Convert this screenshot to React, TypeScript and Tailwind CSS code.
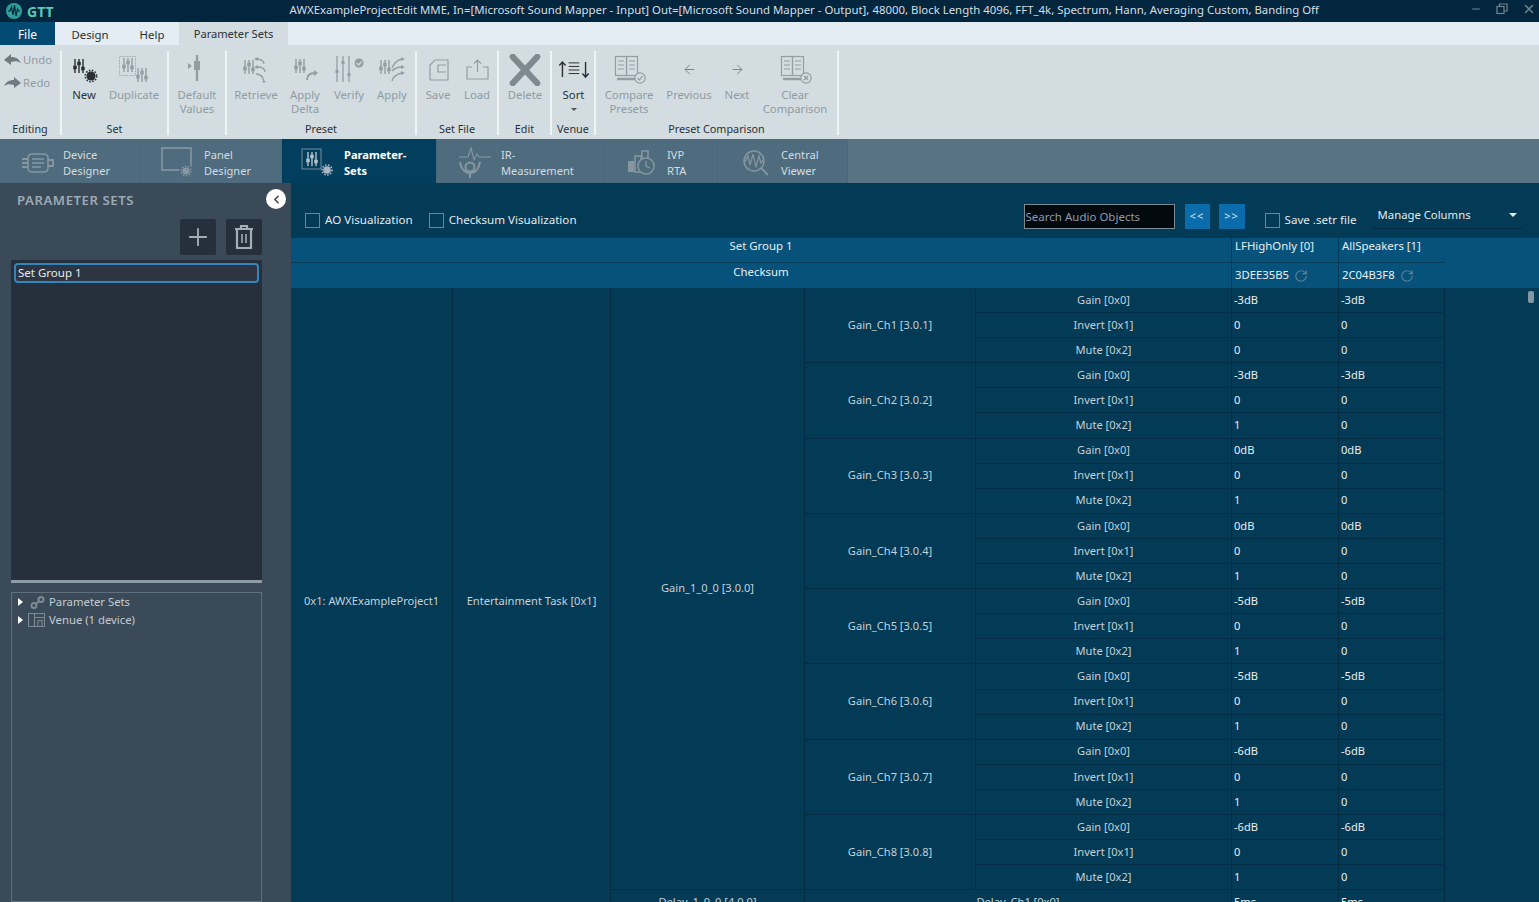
import React from "react";
import { ArrowLeft, ArrowRight, RotateCw, ChevronLeft, Plus, Minus, X } from "lucide-react";

const G = "#929da4";
const D = "#2a2f33";

function Sliders({ x = 0, y = 0, c = G, s = 1 }: { x?: number; y?: number; c?: string; s?: number }) {
  return (
    <g transform={`translate(${x} ${y}) scale(${s})`} stroke={c} strokeWidth="1.4" fill={c}>
      <path d="M2 0V14M6 0V14M10 0V14" fill="none" />
      <rect x="0.5" y="7" width="3" height="3" strokeWidth="0.5" />
      <rect x="4.5" y="3" width="3" height="3" strokeWidth="0.5" />
      <rect x="8.5" y="8" width="3" height="3" strokeWidth="0.5" />
    </g>
  );
}

function Gear({ cx, cy, r = 4.5, c = D }: { cx: number; cy: number; r?: number; c?: string }) {
  return (
    <g>
      <circle cx={cx} cy={cy} r={r} fill={c} />
      <circle cx={cx} cy={cy} r={r + 1.2} fill="none" stroke={c} strokeWidth="1.6" strokeDasharray="1.5 1.5" />
    </g>
  );
}

function Ico({ children }: { children: React.ReactNode }) {
  return (
    <svg width="40" height="30" viewBox="0 0 40 30" fill="none">
      {children}
    </svg>
  );
}

const icons: Record<string, React.ReactNode> = {
  New: (
    <Ico>
      <Sliders x={9} y={4} c={D} />
      <Gear cx={27} cy={21} />
    </Ico>
  ),
  Duplicate: (
    <Ico>
      <rect x="5.5" y="1.5" width="16" height="19" stroke={G} strokeWidth="0.8" strokeDasharray="1.5 1" />
      <Sliders x={8} y={3} />
      <Sliders x={22} y={13} />
    </Ico>
  ),
  Default: (
    <Ico>
      <path d="M20 0V26" stroke={G} strokeWidth="2.4" />
      <rect x="17" y="6" width="6" height="9" fill={G} />
      <path d="M11 8L15 11L11 14Z" fill={G} />
    </Ico>
  ),
  Retrieve: (
    <Ico>
      <Sliders x={7} y={5} />
      <path d="M21 4C26 4 28 7 28 9M21 12C26 12 29 14 29 17M20 19C25 19 27 22 28 26" stroke={G} strokeWidth="1.3" />
      <path d="M18 4L22 2V6ZM18 12L22 10V14ZM26 26L30 26L28 28Z" fill={G} />
    </Ico>
  ),
  Delta: (
    <Ico>
      <Sliders x={9} y={4} />
      <path d="M22 25C22 20 25 18 30 18" stroke={G} strokeWidth="1.8" />
      <path d="M29 15L33 18L29 21Z" fill={G} />
    </Ico>
  ),
  Verify: (
    <Ico>
      <path d="M8 1V27M14 1V27M20 1V27" stroke={G} strokeWidth="1.3" />
      <rect x="6.5" y="15" width="3" height="3" fill={G} />
      <rect x="12.5" y="6" width="3" height="3" fill={G} />
      <rect x="18.5" y="18" width="3" height="3" fill={G} />
      <circle cx="30" cy="8" r="4.5" fill={G} />
      <path d="M27.5 8L29.5 10L32.5 6.5" stroke="#d3dde1" strokeWidth="1.2" />
    </Ico>
  ),
  Apply: (
    <Ico>
      <Sliders x={7} y={5} />
      <path d="M20 13C22 8 25 5 30 4M20 16C23 13 26 12 30 12M20 26C21 22 25 19 30 18" stroke={G} strokeWidth="1.3" />
      <path d="M29 2L33 4L29 6ZM29 10L33 12L29 14ZM29 16L33 18L29 20Z" fill={G} />
    </Ico>
  ),
  Save: (
    <Ico>
      <path d="M17 5H30V25H13C12 25 12 24 12 24V10Z" stroke={G} strokeWidth="1.2" />
      <path d="M28 10H20V17H28" stroke={G} strokeWidth="1.2" />
    </Ico>
  ),
  Load: (
    <Ico>
      <path d="M15 12H10V24H31V12H26" stroke={G} strokeWidth="1.2" />
      <path d="M20.5 17V5M17 8.5L20.5 5L24 8.5" stroke={G} strokeWidth="1.2" />
    </Ico>
  ),
  Delete: (
    <svg width="34" height="32" viewBox="0 0 36 34" fill="none">
      <path d="M5 3L31 31M31 3L5 31" stroke="#7f8a90" strokeWidth="6.5" strokeLinecap="round" />
    </svg>
  ),
  Sort: (
    <svg width="32" height="30" viewBox="0 0 36 30" fill="none">
      <path d="M5 23V6M1.5 10L5 6L8.5 10M31 6V23M27.5 19L31 23L34.5 19" stroke={D} strokeWidth="1.6" />
      <path d="M12 7H24M12 11H24M12 15H24M12 19H24" stroke={D} strokeWidth="1.1" />
    </svg>
  ),
  Compare: (
    <svg width="40" height="30" viewBox="0 0 40 30" fill="none">
      <rect x="6.5" y="1.5" width="11" height="19" stroke={G} strokeWidth="1.2" />
      <rect x="17.5" y="1.5" width="11" height="19" stroke={G} strokeWidth="1.2" />
      <path d="M9 6H15M9 10H15M9 14H15M20 6H26M20 10H26M20 14H26" stroke={G} strokeWidth="1.2" />
      <path d="M8 24H26" stroke={G} strokeWidth="2.5" />
      <circle cx="31" cy="23" r="5.2" fill="#d3dde1" stroke={G} strokeWidth="1.2" />
      <path d="M28.5 23L30.5 25L33.5 21" stroke={G} strokeWidth="1.2" />
    </svg>
  ),
  Clear: (
    <svg width="40" height="30" viewBox="0 0 40 30" fill="none">
      <rect x="6.5" y="1.5" width="11" height="19" stroke={G} strokeWidth="1.2" />
      <rect x="17.5" y="1.5" width="11" height="19" stroke={G} strokeWidth="1.2" />
      <path d="M9 6H15M9 10H15M9 14H15M20 6H26M20 10H26M20 14H26" stroke={G} strokeWidth="1.2" />
      <path d="M8 24H26" stroke={G} strokeWidth="2.5" />
      <circle cx="31" cy="23" r="5.2" fill="#d3dde1" stroke={G} strokeWidth="1.2" />
      <path d="M29 21L33 25M33 21L29 25" stroke={G} strokeWidth="1.4" />
    </svg>
  ),
  Previous: <ArrowLeft size={15} color="#7a868d" strokeWidth={1.6} />,
  Next: <ArrowRight size={15} color="#7a868d" strokeWidth={1.6} />,
};

function Btn({ w, icon, label, dark, caret }: { w: string; icon: string; label: string; dark?: boolean; caret?: boolean }) {
  return (
    <div className={`${w} flex shrink-0 flex-col items-center`}>
      <div className="flex h-[37px] items-center justify-center">{icons[icon]}</div>
      <div className={`whitespace-pre-line text-center text-[11.3px] leading-[14px] ${dark ? "text-[#2b3136]" : "text-[#8f9ba2]"}`}>{label}</div>
      {caret && <div className="mt-[6px] h-0 w-0 border-x-[3px] border-t-[3px] border-x-transparent border-t-[#555]" />}
    </div>
  );
}

function Group({ w, label, children }: { w: string; label: string; children?: React.ReactNode }) {
  return (
    <div className={`${w} flex h-[84px] shrink-0 flex-col border-r-2 border-[#eef3f6]`}>
      <div className="flex min-h-0 flex-1">{children}</div>
      <div className="h-[13px] whitespace-nowrap text-center text-[10.8px] leading-[14px] text-[#2b3136]">{label}</div>
    </div>
  );
}

function TabIcon({ name }: { name: string }) {
  const c = "#8797a2";
  if (name === "device")
    return (
      <svg width="34" height="24" viewBox="0 0 34 24" fill="none">
        <rect x="7" y="3" width="20" height="18" rx="4" stroke={c} strokeWidth="1.6" />
        <path d="M11 8H23M11 12H23M11 16H20" stroke={c} strokeWidth="1.4" />
        <path d="M1 8H7M1 12H7M1 16H7M27 9H32V15H27" stroke={c} strokeWidth="1.8" />
      </svg>
    );
  if (name === "panel")
    return (
      <svg width="36" height="32" viewBox="0 0 36 32" fill="none">
        <rect x="1" y="1" width="29" height="22" stroke={c} strokeWidth="1.6" />
        <circle cx="25" cy="24" r="7" fill="#4e6c7d" />
        <Gear cx={25} cy={24} r={3.6} c={c} />
      </svg>
    );
  if (name === "param")
    return (
      <svg width="36" height="30" viewBox="0 0 36 30" fill="none">
        <rect x="1" y="1" width="19" height="20" stroke="#7f95a3" strokeWidth="0.9" />
        <Sliders x={5} y={4} c="#b7c3cb" />
        <Gear cx={26} cy={22} r={3.8} c="#a9b6bf" />
      </svg>
    );
  if (name === "ir")
    return (
      <svg width="34" height="34" viewBox="0 0 34 34" fill="none">
        <path d="M1 11H10L13 2L16 14L19 8L21 11H33" stroke={c} strokeWidth="1.1" />
        <circle cx="12" cy="21" r="4.5" stroke={c} strokeWidth="2" />
        <path d="M2 16C3 23 7 27 12 27C17 27 21 23 22 16M12 27V32" stroke={c} strokeWidth="2" />
      </svg>
    );
  if (name === "ivp")
    return (
      <svg width="30" height="26" viewBox="0 0 30 26" fill="none">
        <rect x="1" y="11" width="6" height="11" fill={c} />
        <rect x="8" y="6" width="6" height="16" stroke={c} strokeWidth="1.6" />
        <rect x="15" y="1" width="6" height="9" stroke={c} strokeWidth="1.6" />
        <circle cx="19" cy="16" r="8" fill="#4e6c7d" stroke={c} strokeWidth="1.5" />
        <path d="M19 11V16L23 18" stroke={c} strokeWidth="1.3" />
      </svg>
    );
  return (
    <svg width="28" height="28" viewBox="0 0 28 28" fill="none">
      <circle cx="12" cy="12" r="10" stroke={c} strokeWidth="1.5" />
      <path d="M3 13L6 7L8 16L11 5L14 18L17 7L19 14L21 11" stroke={c} strokeWidth="1.2" />
      <path d="M19 19L26 26" stroke={c} strokeWidth="1.8" />
    </svg>
  );
}

function Tab({ w, icon, iconW, l1, l2, active }: { w: string; icon: string; iconW: string; l1: string; l2: string; active?: boolean }) {
  return (
    <div className={`${w} flex h-[44px] shrink-0 items-center border-r border-[#4a6777] ${active ? "bg-[#023f5f]" : "bg-[#4e6c7d]"}`}>
      <div className={`${iconW} flex shrink-0 justify-center pl-[12px] pt-[3px]`}>
        <TabIcon name={icon} />
      </div>
      <div className={`pt-[4px] text-[11.1px] leading-[16px] ${active ? "font-bold text-white" : "text-[#d3dde3]"}`}>
        <div>{l1}</div>
        <div>{l2}</div>
      </div>
    </div>
  );
}

function Check({ label, text = "text-[#e4ebef]" }: { label: string; text?: string }) {
  return (
    <div className="flex items-center gap-[5px]">
      <div className="h-[15px] w-[15px] border border-[#71848f]" />
      <span className={`pb-[1px] text-[11.6px] leading-[15px] ${text}`}>{label}</span>
    </div>
  );
}

const cell = "flex items-center border-r border-b border-[#022c43] text-[11.1px]";
const center = `${cell} justify-center text-[#c4d1d9]`;
const val = `${cell} pl-[2px] text-[#e9eff2]`;

const channels = [
  ["Gain_Ch1 [3.0.1]", "-3dB", "0", "0", "-3dB", "0", "0"],
  ["Gain_Ch2 [3.0.2]", "-3dB", "0", "1", "-3dB", "0", "0"],
  ["Gain_Ch3 [3.0.3]", "0dB", "0", "1", "0dB", "0", "0"],
  ["Gain_Ch4 [3.0.4]", "0dB", "0", "1", "0dB", "0", "0"],
  ["Gain_Ch5 [3.0.5]", "-5dB", "0", "1", "-5dB", "0", "0"],
  ["Gain_Ch6 [3.0.6]", "-5dB", "0", "1", "-5dB", "0", "0"],
  ["Gain_Ch7 [3.0.7]", "-6dB", "0", "1", "-6dB", "0", "0"],
  ["Gain_Ch8 [3.0.8]", "-6dB", "0", "1", "-6dB", "0", "0"],
];

export default function App() {
  return (
    <div className="relative h-[902px] w-[1539px] overflow-hidden bg-[#033a55] font-['Noto_Sans','Open_Sans',sans-serif]">
      {/* Title bar */}
      <div className="flex h-[22px] items-center bg-[#02263e]">
        <svg className="ml-[5px]" width="18" height="18" viewBox="0 0 18 18" fill="none">
          <circle cx="9" cy="9" r="8" fill="#2f9f9a" />
          <path d="M3 9H5L6.5 5L8 13L9.5 3L11 14L12.5 7L13.5 9H15" stroke="#02263e" strokeWidth="1.2" />
        </svg>
        <span className="ml-[4px] text-[14px] font-bold text-[#5ec8b4]">GTT</span>
        <span className="ml-[236px] whitespace-nowrap pb-[3px] text-[11.4px] text-[#d5dfe5]">
          AWXExampleProjectEdit MME, In=[Microsoft Sound Mapper - Input] Out=[Microsoft Sound Mapper - Output], 48000, Block Length 4096, FFT_4k, Spectrum, Hann, Averaging Custom, Banding Off
        </span>
        <div className="ml-auto flex items-center gap-[14px] pb-[5px] pr-[3px] text-[#6f8594]">
          <Minus size={12} />
          <svg width="12" height="12" viewBox="0 0 12 12" fill="none" stroke="#6f8594" strokeWidth="1.2">
            <rect x="1" y="3.5" width="7" height="7" />
            <path d="M3.5 3.5V1H11V8H8" />
          </svg>
          <X size={14} strokeWidth={2.5} />
        </div>
      </div>

      {/* Menu */}
      <div className="flex h-[23px] bg-[#e3edf3] pt-0 text-[11.1px] text-[#2b3136]">
        <div className="flex w-[55px] items-center justify-center bg-[#024a72] pt-[2px] text-[12px] text-white">File</div>
        <div className="flex w-[70px] items-center justify-center pt-[2px] text-[11.4px]">Design</div>
        <div className="flex w-[54px] items-center justify-center pt-[2px] text-[11.4px]">Help</div>
        <div className="flex w-[109px] items-center justify-center bg-[#d3dde1] pt-[2px]">Parameter Sets</div>
      </div>

      {/* Ribbon */}
      <div className="flex h-[94px] items-start bg-[#d3dde1] pt-[6px]">
        <Group w="w-[62px]" label="Editing">
          <div className="flex flex-col gap-[7px] pt-[1px] text-[11.3px] leading-[16px] text-[#8f9ba2]">
            <div className="flex items-center gap-[2px] pl-[4px]">
              <svg width="17" height="12" viewBox="0 0 17 12">
                <path d="M0 6L7 0V3C12 3 15 5 17 9C14 7 11 7 7 8V11Z" fill="#6f7a81" />
              </svg>
              Undo
            </div>
            <div className="flex items-center gap-[2px] pl-[4px]">
              <svg width="17" height="12" viewBox="0 0 17 12">
                <path d="M17 6L10 0V3C5 3 2 5 0 9C3 7 6 7 10 8V11Z" fill="#6f7a81" />
              </svg>
              Redo
            </div>
          </div>
        </Group>
        <Group w="w-[107px]" label="Set">
          <Btn w="w-[44px]" icon="New" label="New" dark />
          <Btn w="w-[56px]" icon="Duplicate" label="Duplicate" />
        </Group>
        <Group w="w-[58px]" label="">
          <Btn w="w-[56px]" icon="Default" label={"Default\nValues"} />
        </Group>
        <Group w="w-[190px]" label="Preset">
          <Btn w="w-[58px]" icon="Retrieve" label="Retrieve" />
          <Btn w="w-[40px]" icon="Delta" label={"Apply\nDelta"} />
          <Btn w="w-[48px]" icon="Verify" label="Verify" />
          <Btn w="w-[38px]" icon="Apply" label="Apply" />
        </Group>
        <Group w="w-[82px]" label="Set File">
          <Btn w="w-[42px]" icon="Save" label="Save" />
          <Btn w="w-[36px]" icon="Load" label="Load" />
        </Group>
        <Group w="w-[53px]" label="Edit">
          <Btn w="w-[52px]" icon="Delete" label="Delete" />
        </Group>
        <Group w="w-[44px]" label="Venue">
          <Btn w="w-[43px]" icon="Sort" label="Sort" dark caret />
        </Group>
        <Group w="w-[243px]" label="Preset Comparison">
          <Btn w="w-[66px]" icon="Compare" label={"Compare\nPresets"} />
          <Btn w="w-[54px]" icon="Previous" label="Previous" />
          <Btn w="w-[42px]" icon="Next" label="Next" />
          <Btn w="w-[74px]" icon="Clear" label={"Clear\nComparison"} />
        </Group>
      </div>

      {/* Module tabs */}
      <div className="flex h-[44px] bg-[#587484]">
        <Tab w="w-[141px]" icon="device" iconW="w-[63px]" l1="Device" l2="Designer" />
        <Tab w="w-[141px]" icon="panel" iconW="w-[63px]" l1="Panel" l2="Designer" />
        <Tab w="w-[155px]" icon="param" iconW="w-[62px]" l1="Parameter-" l2="Sets" active />
        <Tab w="w-[168px]" icon="ir" iconW="w-[64px]" l1="IR-" l2="Measurement" />
        <Tab w="w-[113px]" icon="ivp" iconW="w-[62px]" l1="IVP" l2="RTA" />
        <Tab w="w-[130px]" icon="central" iconW="w-[63px]" l1="Central" l2="Viewer" />
      </div>

      <div className="flex h-[719px]">
        {/* Left panel */}
        <div className="flex w-[291px] shrink-0 flex-col bg-[#3a4a58] pl-[11px] pr-[29px]">
          <div className="ml-[6px] h-[36px] pt-[7px] text-[13.2px] font-semibold leading-[20px] tracking-[0.55px] text-[#9dabb5]">PARAMETER SETS</div>
          <div className="flex h-[41px] justify-end gap-[10px]">
            <div className="flex h-[36px] w-[36px] items-center justify-center rounded-[2px] bg-[#25303c] text-[#a4aeb5]">
              <Plus size={28} strokeWidth={1.6} />
            </div>
            <div className="flex h-[36px] w-[36px] items-center justify-center rounded-[2px] bg-[#25303c]">
              <svg width="20" height="26" viewBox="0 0 20 26" fill="none" stroke="#a4aeb5" strokeWidth="2.2">
                <path d="M1 5H19M7 5V2H13V5" />
                <path d="M3 5V24H17V5" />
                <path d="M8 10V19M12 10V19" strokeWidth="1.6" />
              </svg>
            </div>
          </div>
          <div className="h-[320px] bg-[#25303c] px-[3px] pt-[3px]">
            <div className="h-[20px] rounded-[4px] border-2 border-[#2f87bb] bg-[#2c3541] pl-[2px] text-[11.5px] leading-[15px] text-[#e6ebee]">Set Group 1</div>
          </div>
          <div className="h-[3px] bg-[#8d9ca6]" />
          <div className="mt-[9px] flex-1 border border-[#5f6f7b] text-[11.3px] text-[#c3ccd2]">
            <div className="flex h-[18px] items-center pl-[6px]">
              <div className="h-0 w-0 border-y-[4px] border-l-[5px] border-y-transparent border-l-white" />
              <svg className="ml-[7px]" width="15" height="13" viewBox="0 0 15 13" fill="none" stroke="#7d8a94" strokeWidth="2">
                <circle cx="4" cy="9.5" r="2.5" />
                <circle cx="11" cy="3.5" r="2.5" />
                <path d="M5.5 8L9.5 5" />
              </svg>
              <span className="ml-[4px]">Parameter Sets</span>
            </div>
            <div className="flex h-[18px] items-center pl-[6px]">
              <div className="h-0 w-0 border-y-[4px] border-l-[5px] border-y-transparent border-l-white" />
              <svg className="ml-[5px]" width="17" height="14" viewBox="0 0 17 14" fill="none" stroke="#7d8a94" strokeWidth="1.1">
                <rect x="0.5" y="0.5" width="16" height="13" />
                <path d="M6.5 0.5V13.5M6.5 4.5H16.5M10 7.5H14V13.5M10 7.5V13.5" />
              </svg>
              <span className="ml-[4px]">Venue (1 device)</span>
            </div>
          </div>
        </div>

        {/* Main */}
        <div className="flex min-w-0 flex-1 flex-col">
          <div className="flex h-[55px] shrink-0 items-start">
            <div className="ml-[14px] mt-[29px] flex gap-[16px]">
              <Check label="AO Visualization" />
              <Check label="Checksum Visualization" />
            </div>
            <div className="ml-[447px] mt-[21px] flex h-[25px] w-[151px] shrink-0 items-center border border-[#7c8a94] bg-[#020a10] pl-[1px] text-[11.5px] text-[#8d9aa3]">Search Audio Objects</div>
            <div className="ml-[10px] mt-[21px] flex h-[25px] w-[25px] shrink-0 items-center justify-center bg-[#0a6cab] text-[11px] tracking-[1px] text-[#d8e6ee]">&lt;&lt;</div>
            <div className="ml-[9px] mt-[21px] flex h-[25px] w-[26px] shrink-0 items-center justify-center bg-[#0a6cab] text-[11px] tracking-[1px] text-[#d8e6ee]">&gt;&gt;</div>
            <div className="ml-[20px] mt-[29px] shrink-0">
              <Check label="Save .setr file" />
            </div>
            <div className="ml-[15px] mt-[21px] flex h-[25px] w-[150px] shrink-0 items-start justify-between border-b border-[#022c43] pl-[6px] pr-[5px] pt-[3px] text-[11.3px] text-[#e4ebef]">
              Manage Columns
              <div className="mt-[6px] h-0 w-0 border-x-[4px] border-t-[4px] border-x-transparent border-t-[#e4ebef]" />
            </div>
          </div>

          {/* Table headers */}
          <div className="grid h-[50px] shrink-0 grid-cols-[941px_107px_106px_1fr] grid-rows-[25px_25px] bg-[#07527a] text-[11.4px] text-[#e9eff2]">
            <div className="flex -translate-y-0 items-start justify-center border-r border-b border-[#033a55] leading-[15px]">Set Group 1</div>
            <div className="border-r border-b border-[#033a55] pl-[3px] leading-[15px]">LFHighOnly [0]</div>
            <div className="border-b border-[#033a55] pl-[3px] leading-[15px]">AllSpeakers [1]</div>
            <div />
            <div className="flex items-start justify-center border-r border-[#033a55] leading-[17px]">Checksum</div>
            <div className="flex items-center gap-[5px] border-r border-[#033a55] pl-[3px] text-[11.3px]">
              3DEE35B5
              <RotateCw size={14} color="#5f8296" />
            </div>
            <div className="flex items-center gap-[5px] pl-[3px] text-[11.3px]">
              2C04B3F8
              <RotateCw size={14} color="#5f8296" />
            </div>
            <div />
          </div>

          {/* Table body */}
          <div className="relative min-h-0 flex-1 overflow-hidden">
            <div className="grid grid-cols-[162px_158px_194px_171px_256px_107px_106px] auto-rows-[25.1px]">
              <div className={`${center} row-span-25`}>0x1: AWXExampleProject1</div>
              <div className={`${center} row-span-25`}>Entertainment Task [0x1]</div>
              <div className={`${center} row-span-24`}>Gain_1_0_0 [3.0.0]</div>
              {channels.map((c) => (
                <React.Fragment key={c[0]}>
                  <div className={`${center} row-span-3`}>{c[0]}</div>
                  <div className={center}>Gain [0x0]</div>
                  <div className={val}>{c[1]}</div>
                  <div className={val}>{c[4]}</div>
                  <div className={center}>Invert [0x1]</div>
                  <div className={val}>{c[2]}</div>
                  <div className={val}>{c[5]}</div>
                  <div className={center}>Mute [0x2]</div>
                  <div className={val}>{c[3]}</div>
                  <div className={val}>{c[6]}</div>
                </React.Fragment>
              ))}
              <div className={center}>Delay_1_0_0 [4.0.0]</div>
              <div className={`${center} col-span-2`}>Delay_Ch1 [0x0]</div>
              <div className={val}>5ms</div>
              <div className={val}>5ms</div>
            </div>
            <div className="absolute left-[1237px] top-[3px] h-[12px] w-[6px] rounded-[2px] bg-[#8297a4]" />
          </div>
        </div>
      </div>

      <div className="absolute left-[266px] top-[189px] flex h-[20px] w-[20px] items-center justify-center rounded-full bg-white text-[#3a4a58]">
        <ChevronLeft size={13} strokeWidth={3} />
      </div>
    </div>
  );
}
